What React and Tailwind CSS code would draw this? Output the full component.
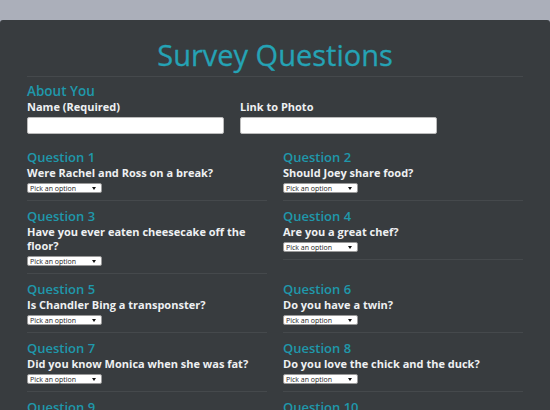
import React from "react";

const questions = [
  "Were Rachel and Ross on a break?",
  "Should Joey share food?",
  "Have you ever eaten cheesecake off the floor?",
  "Are you a great chef?",
  "Is Chandler Bing a transponster?",
  "Do you have a twin?",
  "Did you know Monica when she was fat?",
  "Do you love the chick and the duck?",
  "",
  "",
];

function PickSelect() {
  return (
    <div className="mt-[3px] flex h-[10px] w-[75px] items-center justify-between rounded-[2px] border border-[#9a9a9a] bg-white pl-[2px] pr-[5px]">
      <span className="text-[7px] leading-none text-[#222]">Pick an option</span>
      <svg width="4" height="3" viewBox="0 0 4 3">
        <path d="M0 0 L4 0 L2 3 Z" fill="#111" />
      </svg>
    </div>
  );
}

export default function App() {
  return (
    <div
      className="min-h-screen bg-[#abafba] pt-[20px]"
      style={{ fontFamily: '"Open Sans", "Noto Sans", sans-serif' }}
    >
      <div className="rounded-t-[3px] bg-[#383c3f] px-[27px] pb-10 pt-[18px]">
        <h1 className="text-center text-[29px] leading-[34px] text-[#25a3b5] [-webkit-text-stroke:0.3px_#25a3b5]">
          Survey Questions
        </h1>
        <div className="mt-[4px] h-px bg-[#45494c]" />

        <h2 className="mt-[5px] text-[13.5px] font-semibold leading-[18px] text-[#1f98ab]">
          About You
        </h2>
        <div className="flex gap-4">
          <div className="w-[197px]">
            <div className="text-[11px] font-bold leading-[14px] text-[#eef0f2]">
              Name (Required)
            </div>
            <input className="mt-[3px] block h-[17px] w-full rounded-[2px] border border-[#bbb] bg-white" />
          </div>
          <div className="w-[197px]">
            <div className="text-[11px] font-bold leading-[14px] text-[#eef0f2]">
              Link to Photo
            </div>
            <input className="mt-[3px] block h-[17px] w-full rounded-[2px] border border-[#bbb] bg-white" />
          </div>
        </div>

        <div className="mt-[14px] grid grid-cols-2 items-start gap-x-4 gap-y-[6px]">
          {questions.map((q, i) => (
            <div key={i}>
              <h3 className="text-[13px] font-semibold leading-[18px] text-[#1f98ab]">
                Question {i + 1}
              </h3>
              {q && (
                <>
                  <div className="text-[11px] font-bold leading-[14px] text-[#eef0f2]">
                    {q}
                  </div>
                  <PickSelect />
                  <div className="mt-[7px] h-px bg-[#45494c]" />
                </>
              )}
            </div>
          ))}
        </div>
      </div>
    </div>
  );
}
